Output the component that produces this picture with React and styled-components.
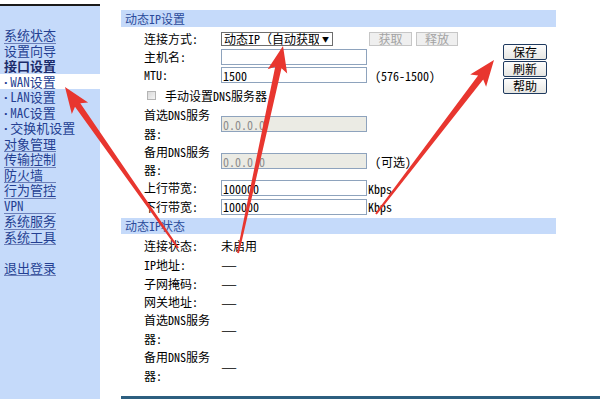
import styled, { createGlobalStyle } from 'styled-components';

const GlobalStyle = createGlobalStyle`
  html, body {
    margin: 0;
    padding: 0;
    background: #fff;
  }
  body {
    font-family: "Noto Sans Mono CJK SC", "Noto Sans CJK SC", sans-serif;
    font-size: 12px;
    color: #000;
  }
`;

// ── Layout ──────────────────────────────────────────
const Page = styled.div`
  position: relative;
  display: flex;
  width: 600px;
  height: 399px;
  overflow: hidden;
`;

const Sidebar = styled.nav`
  width: 100px;
  flex-shrink: 0;
  margin-top: 4px;
  border-top: 2px solid #1a1a1a;
  background: #c5dafa;
  padding-top: 21px;
  font-size: 13px;
`;

const MenuItem = styled.div`
  height: 15.5px;
  line-height: 15.5px;
  padding-left: 4px;
  white-space: nowrap;
  color: ${(p) => (p.$head ? '#1b2c6b' : '#243f92')};
  font-weight: ${(p) => (p.$head ? 700 : 400)};
  background: ${(p) => (p.$active ? '#fff' : 'transparent')};
`;

const MenuLink = styled.span`
  display: inline-block;
  box-sizing: border-box;
  width: 52px;
  height: 15.5px;
  line-height: 14.5px;
  border-bottom: 1px solid ${(p) => (p.$line ? '#6b7fb8' : 'transparent')};
`;

const Bullet = styled.span`
  font-family: "Liberation Sans", sans-serif;
  font-weight: 700;
  margin-right: 2px;
`;

const Main = styled.main`
  flex: 1;
  display: flex;
  flex-direction: column;
  padding: 10px 0 0 21px;
`;

const SectionBar = styled.div`
  box-sizing: border-box;
  width: 435px;
  height: ${(p) => p.$h}px;
  line-height: ${(p) => p.$h}px;
  margin-top: ${(p) => p.$mt || 0}px;
  padding-left: 4px;
  background: #c5dafa;
  color: #2b4b9b;
`;

const SettingsArea = styled.div`
  display: flex;
  width: 435px;
`;

const FormTable = styled.div`
  flex: 1;
  padding: ${(p) => p.$pt || 0}px 0 0 23px;
`;

const Row = styled.div`
  display: flex;
  align-items: center;
  height: ${(p) => p.$h}px;
`;

const Label = styled.div`
  width: 77px;
  flex-shrink: 0;
  line-height: ${(p) => p.$lh || 18}px;
`;

// ── 表单控件 ────────────────────────────────────────
const SelectBox = styled.div`
  position: relative;
  box-sizing: border-box;
  width: 112px;
  height: 14px;
  line-height: 12px;
  padding-left: 2px;
  border: 1px solid #6d6d6d;
  background: #fff;
  overflow: hidden;
  white-space: nowrap;
`;

const SelectArrow = styled.span`
  position: absolute;
  top: 0;
  right: 0;
  width: 13px;
  height: 12px;
  background: #fff;
  font-size: 7px;
  line-height: 12px;
  text-align: center;
`;

const GrayButton = styled.span`
  box-sizing: border-box;
  width: ${(p) => p.$w}px;
  height: 14px;
  line-height: 12px;
  margin-left: ${(p) => p.$ml}px;
  border: 1px solid #c6c6c6;
  background: #efefef;
  color: #a3a3a3;
  text-align: center;
`;

const TextInput = styled.input`
  box-sizing: border-box;
  width: 146px;
  height: 16px;
  margin: 0;
  padding: 0 1px;
  border: 1px solid #8ea3bd;
  border-radius: 0;
  outline: none;
  font: inherit;
  line-height: 14px;
  color: ${(p) => (p.disabled ? '#8d8d8d' : '#000')};
  background: ${(p) => (p.disabled ? '#ebebe4' : '#fff')};
`;

const Hint = styled.span`
  margin-left: ${(p) => p.$ml}px;
  white-space: nowrap;
`;

const CheckRow = styled.div`
  display: flex;
  align-items: center;
  height: 20px;
  padding-left: 3px;
`;

const CheckBox = styled.span`
  box-sizing: border-box;
  width: 9px;
  height: 9px;
  margin-right: 9px;
  border: 1px solid #b4b4b4;
  background: linear-gradient(135deg, #d9d9d9, #f4f4f4);
`;

const ButtonColumn = styled.div`
  display: flex;
  flex-direction: column;
  gap: 1px;
  margin-right: 9px;
  padding-top: 17px;
`;

const ActionButton = styled.button`
  box-sizing: border-box;
  width: 44px;
  height: 16px;
  margin: 0;
  padding: 0;
  border: 1px solid #1f3a5f;
  border-radius: 2px;
  background: linear-gradient(#fdfdfd, #e6e6e2);
  font: inherit;
  line-height: 14px;
  color: #000;
`;

const Dash = styled.span`
  display: inline-block;
  transform: scaleX(1.5);
  transform-origin: left center;
`;

const BottomLine = styled.div`
  height: 3px;
  margin-top: 10px;
  background: #2d5f80;
`;

// ── 标注箭头 ────────────────────────────────────────
const Overlay = styled.svg`
  position: absolute;
  left: 0;
  top: 0;
  pointer-events: none;
`;

const arrowPoints = ([x1, y1], [x2, y2]) => {
  const dx = x2 - x1;
  const dy = y2 - y1;
  const len = Math.hypot(dx, dy);
  const ux = dx / len;
  const uy = dy / len;
  const nx = -uy;
  const ny = ux;
  const head = 26;
  const wing = 10;
  const tail = 1;
  const shaft = 3.2;
  const bx = x2 - ux * head;
  const by = y2 - uy * head;
  const nx2 = bx + ux * 4;
  const ny2 = by + uy * 4;
  const pts = [
    [x1 + nx * tail, y1 + ny * tail],
    [nx2 + nx * shaft, ny2 + ny * shaft],
    [bx + nx * wing, by + ny * wing],
    [x2, y2],
    [bx - nx * wing, by - ny * wing],
    [nx2 - nx * shaft, ny2 - ny * shaft],
    [x1 - nx * tail, y1 - ny * tail],
  ];
  return pts.map((p) => p.map((v) => v.toFixed(1)).join(',')).join(' ');
};

const arrows = [
  { from: [178, 248], to: [65, 87] },
  { from: [238, 253], to: [283, 46] },
  { from: [376, 214], to: [494, 60] },
];

// ── 数据 ────────────────────────────────────────────
const menu = [
  { text: '系统状态', line: true },
  { text: '设置向导' },
  { text: '接口设置', head: true },
  { text: 'WAN设置', sub: true, active: true },
  { text: 'LAN设置', sub: true },
  { text: 'MAC设置', sub: true },
  { text: '交换机设置', sub: true },
  { text: '对象管理', line: true },
  { text: '传输控制', line: true },
  { text: '防火墙', line: true },
  { text: '行为管控', line: true },
  { text: 'VPN', line: true },
  { text: '系统服务', line: true },
  { text: '系统工具', line: true },
  { text: '' },
  { text: '退出登录', line: true },
];

const status = [
  { label: '连接状态:', value: '未启用', h: 19 },
  { label: 'IP地址:', h: 19 },
  { label: '子网掩码:', h: 19 },
  { label: '网关地址:', h: 18 },
  { label: ['首选DNS服务', '器:'], h: 37, lh: 18.5 },
  { label: ['备用DNS服务', '器:'], h: 37, lh: 18.5 },
];

const renderLabel = (label) =>
  Array.isArray(label) ? (
    <>
      {label[0]}
      <br />
      {label[1]}
    </>
  ) : (
    label
  );

const App = () => (
  <Page>
    <GlobalStyle />
    <Sidebar>
      {menu.map((item, i) => (
        <MenuItem key={i} $head={item.head} $active={item.active}>
          <MenuLink $line={item.line}>
            {item.sub && <Bullet>·</Bullet>}
            {item.text}
          </MenuLink>
        </MenuItem>
      ))}
    </Sidebar>

    <Main>
      <SectionBar $h={17}>动态IP设置</SectionBar>
      <SettingsArea>
        <FormTable $pt={3}>
          <Row $h={18}>
            <Label>连接方式:</Label>
            <SelectBox>
              动态IP（自动获取）
              <SelectArrow>▼</SelectArrow>
            </SelectBox>
            <GrayButton $w={43} $ml={36}>获取</GrayButton>
            <GrayButton $w={42} $ml={4}>释放</GrayButton>
          </Row>
          <Row $h={17}>
            <Label>主机名:</Label>
            <TextInput readOnly value="" />
          </Row>
          <Row $h={20}>
            <Label>MTU:</Label>
            <TextInput readOnly value="1500" />
            <Hint $ml={8}>(576-1500)</Hint>
          </Row>
          <CheckRow>
            <CheckBox />
            手动设置DNS服务器
          </CheckRow>
          <Row $h={38}>
            <Label $lh={19}>{renderLabel(['首选DNS服务', '器:'])}</Label>
            <TextInput disabled value="0.0.0.0" readOnly />
          </Row>
          <Row $h={36}>
            <Label $lh={18}>{renderLabel(['备用DNS服务', '器:'])}</Label>
            <TextInput disabled value="0.0.0.0" readOnly />
            <Hint $ml={8}>(可选)</Hint>
          </Row>
          <Row $h={18}>
            <Label>上行带宽:</Label>
            <TextInput readOnly value="100000" />
            <Hint $ml={1}>Kbps</Hint>
          </Row>
          <Row $h={19}>
            <Label>下行带宽:</Label>
            <TextInput readOnly value="100000" />
            <Hint $ml={1}>Kbps</Hint>
          </Row>
        </FormTable>
        <ButtonColumn>
          <ActionButton>保存</ActionButton>
          <ActionButton>刷新</ActionButton>
          <ActionButton>帮助</ActionButton>
        </ButtonColumn>
      </SettingsArea>

      <SectionBar $h={16} $mt={2}>动态IP状态</SectionBar>
      <FormTable $pt={2}>
        {status.map((s, i) => (
          <Row key={i} $h={s.h}>
            <Label $lh={s.lh}>{renderLabel(s.label)}</Label>
            {s.value ? s.value : <Dash>—</Dash>}
          </Row>
        ))}
      </FormTable>
      <BottomLine />
    </Main>

    <Overlay width="600" height="399" viewBox="0 0 600 399">
      {arrows.map((a, i) => (
        <polygon key={i} points={arrowPoints(a.from, a.to)} fill="#e8362f" />
      ))}
    </Overlay>
  </Page>
);

export default App;
